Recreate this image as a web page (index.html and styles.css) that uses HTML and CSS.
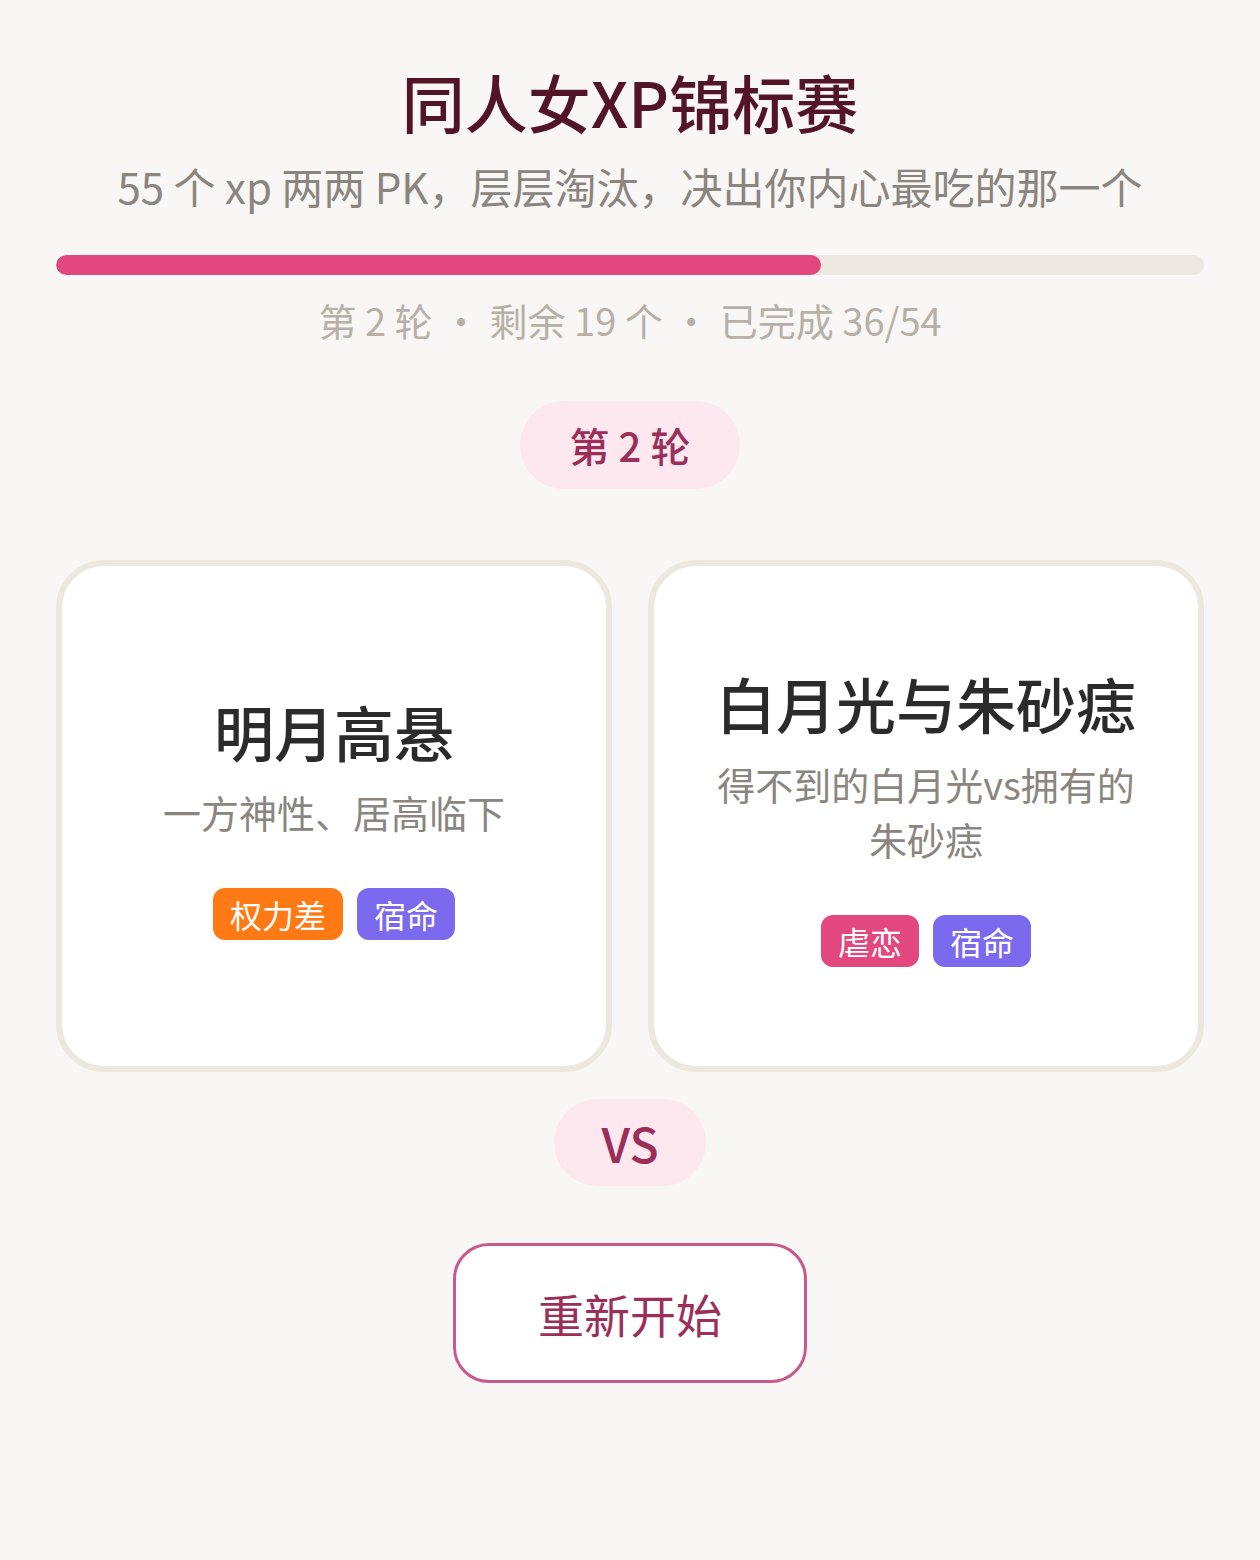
FILE: index.html
```html
<!DOCTYPE html>
<html lang="zh-CN">
<head>
    <meta charset="UTF-8">
    <meta name="viewport" content="width=device-width, initial-scale=1.0">
    <title>同人女XP锦标赛</title>
    <link rel="stylesheet" href="styles.css">
</head>
<body>

    <div class="page">
        <h1 class="title">同人女XP锦标赛</h1>
        <p class="subtitle">55 个 xp 两两 PK，层层淘汰，决出你内心最吃的那一个</p>

        <div class="progress">
            <div class="progress-fill" style="width: 66.67%;"></div>
        </div>
        <p class="stats">第 2 轮 <span class="dot">·</span> 剩余 19 个 <span class="dot">·</span> 已完成 36/54</p>

        <div class="round-pill">第 2 轮</div>

        <div class="match">
            <div class="card">
                <h2 class="card-title">明月高悬</h2>
                <p class="card-desc">一方神性、居高临下</p>
                <div class="tags">
                    <span class="tag tag-orange">权力差</span>
                    <span class="tag tag-purple">宿命</span>
                </div>
            </div>
            <div class="card">
                <h2 class="card-title">白月光与朱砂痣</h2>
                <p class="card-desc">得不到的白月光vs拥有的朱砂痣</p>
                <div class="tags">
                    <span class="tag tag-pink">虐恋</span>
                    <span class="tag tag-purple">宿命</span>
                </div>
            </div>
        </div>

        <div class="vs">VS</div>

        <button class="restart">重新开始</button>
    </div>

</body>
</html>
```

FILE: styles.css
```css
body {
    margin: 0;
    font-family: "Noto Sans CJK SC", "Noto Sans", sans-serif;
    background-color: #f9f7f5;
    color: #2b2b2b;
}
.page {
    padding: 62px 56px 80px;
    display: flex;
    flex-direction: column;
    align-items: center;
    text-align: center;
}
.title {
    margin: 0;
    font-size: 63px;
    line-height: 77px;
    font-weight: 500;
    color: #521429;
}
.subtitle {
    margin: 18px 0 0;
    font-size: 42px;
    line-height: 1.4;
    color: #8a857e;
}
.progress {
    width: 100%;
    height: 20px;
    margin-top: 39px;
    border-radius: 10px;
    background-color: #ede8e1;
    overflow: hidden;
}
.progress-fill {
    height: 100%;
    border-radius: 10px;
    background-color: #e2477d;
}
.stats {
    margin: 20px 0 0;
    font-size: 38px;
    line-height: 50px;
    color: #b7b0a7;
}
.dot {
    margin: 0 1px;
}
.round-pill {
    margin-top: 56px;
    padding: 0 50px;
    height: 88px;
    line-height: 88px;
    border-radius: 44px;
    background-color: #fde8ef;
    color: #9b2f5a;
    font-size: 40px;
    font-weight: 500;
}
.match {
    width: 100%;
    display: grid;
    grid-template-columns: 1fr 1fr;
    gap: 36px;
    margin-top: 71px;
}
.card {
    box-sizing: border-box;
    height: 512px;
    padding: 0 48px;
    border: 6px solid #ece8e0;
    border-radius: 48px;
    background-color: #fff;
    display: flex;
    flex-direction: column;
    align-items: center;
    justify-content: center;
}
.card-title {
    margin: 0;
    font-size: 60px;
    line-height: 1.3;
    font-weight: 500;
    color: #2b2b2b;
}
.card-desc {
    margin: 14px 0 0;
    font-size: 38px;
    line-height: 1.45;
    color: #8a857e;
}
.tags {
    display: flex;
    justify-content: center;
    gap: 14px;
    margin-top: 49px;
}
.tag {
    height: 52px;
    line-height: 52px;
    padding: 0 17px;
    border-radius: 12px;
    font-size: 32px;
    color: #fff;
}
.tag-orange {
    background-color: #ff7a14;
}
.tag-purple {
    background-color: #7c6aee;
}
.tag-pink {
    background-color: #e2477d;
}
.vs {
    margin-top: 27px;
    width: 152px;
    height: 87px;
    line-height: 87px;
    border-radius: 44px;
    background-color: #fde8ef;
    color: #9b2f5a;
    font-size: 48px;
    font-weight: 500;
}
.restart {
    margin-top: 57px;
    width: 354px;
    height: 140px;
    border: 3px solid #c75a88;
    border-radius: 36px;
    background-color: #fff;
    color: #9b2f5a;
    font-family: inherit;
    font-size: 46px;
    cursor: pointer;
}
```
